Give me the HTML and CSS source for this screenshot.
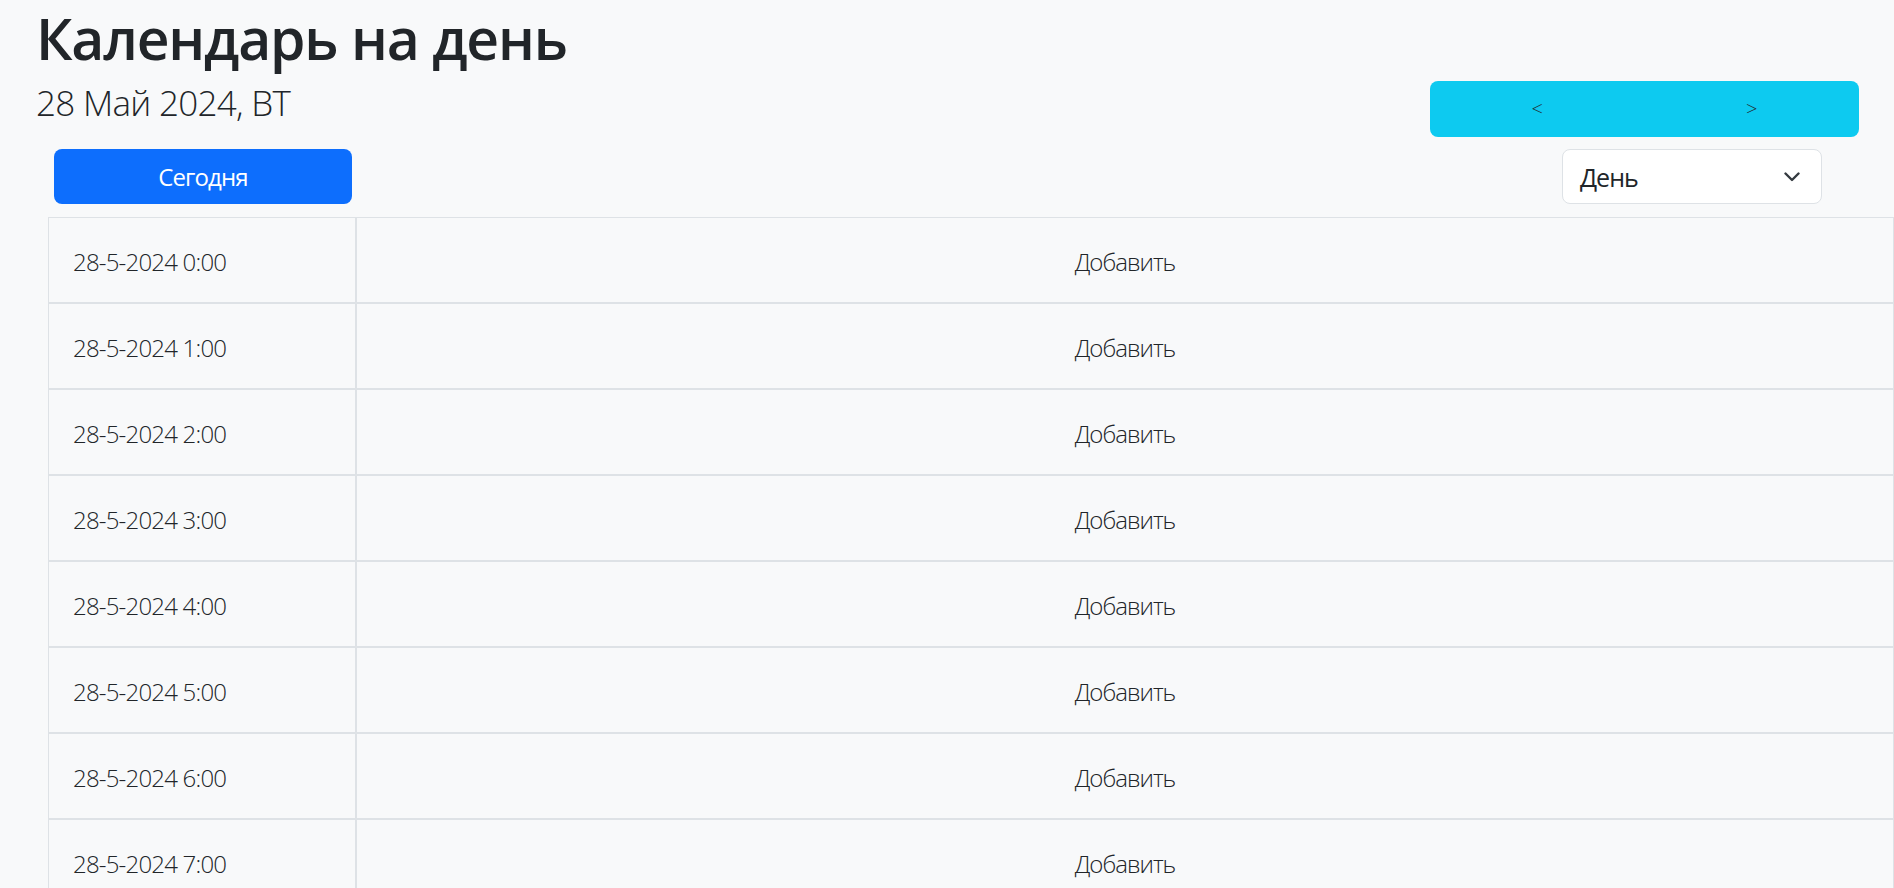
FILE: index.html
```html
<!DOCTYPE html>
<html lang="ru">
<head>
<meta charset="utf-8">
<title>Календарь на день</title>
<link rel="stylesheet" href="styles.css">
</head>
<body>
<div class="page">
  <div class="top-row">
    <div class="heading">
      <h1 class="title">Календарь на день</h1>
      <h3 class="date">28 Май 2024, ВТ</h3>
    </div>
    <div class="nav-group">
      <button class="nav-btn">&lt;</button>
      <button class="nav-btn">&gt;</button>
    </div>
  </div>
  <div class="control-row">
    <button class="today-btn">Сегодня</button>
    <div class="view-select">
      <span>День</span>
      <svg class="chev" width="16" height="10" viewBox="0 0 16 10"><path d="M1.5 1.5 L8 8 L14.5 1.5" fill="none" stroke="#343a40" stroke-width="2.4" stroke-linecap="round" stroke-linejoin="round"/></svg>
    </div>
  </div>
  <div class="day-table">
    <div class="cell time">28-5-2024 0:00</div><div class="cell add">Добавить</div>
    <div class="cell time">28-5-2024 1:00</div><div class="cell add">Добавить</div>
    <div class="cell time">28-5-2024 2:00</div><div class="cell add">Добавить</div>
    <div class="cell time">28-5-2024 3:00</div><div class="cell add">Добавить</div>
    <div class="cell time">28-5-2024 4:00</div><div class="cell add">Добавить</div>
    <div class="cell time">28-5-2024 5:00</div><div class="cell add">Добавить</div>
    <div class="cell time">28-5-2024 6:00</div><div class="cell add">Добавить</div>
    <div class="cell time">28-5-2024 7:00</div><div class="cell add">Добавить</div>
  </div>
</div>
</body>
</html>
```
FILE: styles.css
```css
* { box-sizing: border-box; }
html, body {
  margin: 0;
  padding: 0;
  background: #f8f9fa;
  color: #212529;
  font-family: "Open Sans", "Noto Sans", sans-serif;
  overflow: hidden;
}
.page {
  width: 1894px;
  height: 888px;
  overflow: hidden;
}
.top-row {
  display: flex;
  justify-content: space-between;
  align-items: flex-start;
  padding-left: 36px;
  padding-right: 35px;
}
.heading { display: flex; flex-direction: column; }
.title {
  margin: 0 0 4px 0;
  font-size: 57px;
  font-weight: 600;
  line-height: 1.36;
  letter-spacing: -1.2px;
}
.date {
  margin: 0;
  font-size: 35px;
  font-weight: 300;
  line-height: 1.2;
  letter-spacing: -0.7px;
}
.nav-group {
  margin-top: 81px;
  width: 429px;
  height: 56px;
  display: flex;
  background: #0dcaf0;
  border-radius: 8px;
}
.nav-btn {
  flex: 1;
  border: none;
  background: transparent;
  font-family: inherit;
  font-size: 20px;
  font-weight: 300;
  color: #212529;
  padding: 0;
  padding-bottom: 2px;
}
.control-row {
  display: flex;
  justify-content: space-between;
  align-items: center;
  margin-top: 12px;
  padding-left: 54px;
  padding-right: 72px;
}
.today-btn {
  width: 298px;
  height: 55px;
  border: none;
  border-radius: 8px;
  background: #0d6efd;
  color: #fff;
  font-family: inherit;
  font-size: 24px;
  font-weight: 400;
  letter-spacing: -0.9px;
  padding: 0;
}
.view-select {
  width: 260px;
  height: 55px;
  background: #fff;
  border: 1px solid #dee2e6;
  border-radius: 8px;
  display: flex;
  align-items: center;
  justify-content: space-between;
  padding: 0 21px 0 17px;
  font-size: 25px;
  letter-spacing: -1px;
}
.chev { display: block; }
.day-table {
  margin-top: 13px;
  margin-left: 48px;
  width: 1846px;
  display: grid;
  grid-template-columns: 306px 1fr;
  column-gap: 2px;
  row-gap: 2px;
  background: #dee2e6;
  border: 1px solid #dee2e6;
}
.cell {
  background: #f8f9fa;
  height: 84px;
  display: flex;
  align-items: center;
  font-size: 24px;
  font-weight: 300;
  letter-spacing: -0.8px;
  padding-top: 2px;
}
.time { padding-left: 24px; }
.add { justify-content: center; letter-spacing: -1px; }
```
